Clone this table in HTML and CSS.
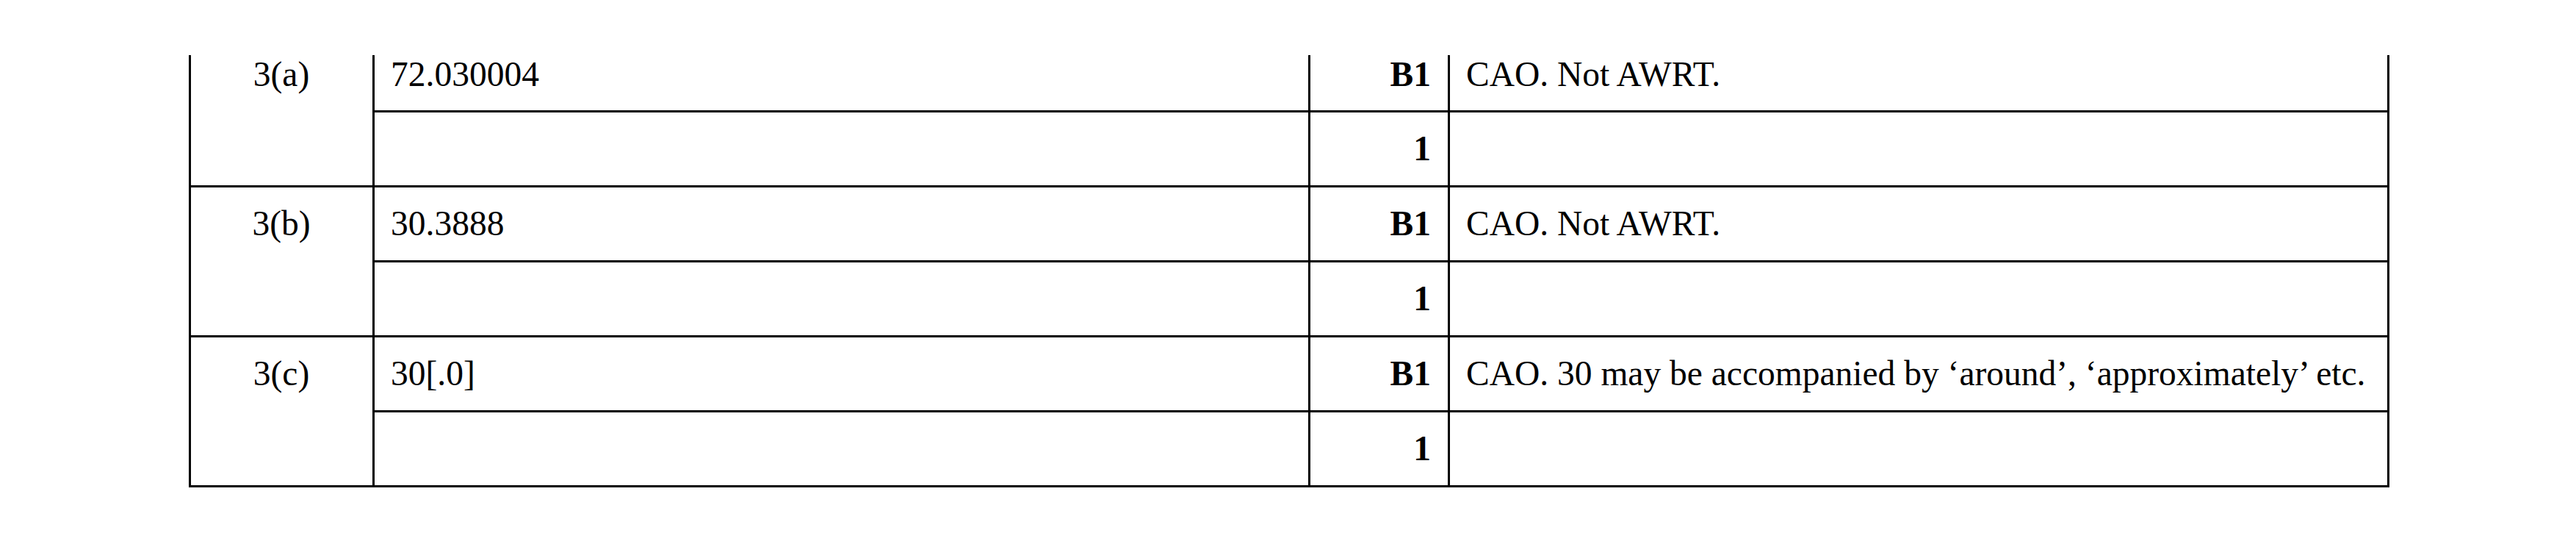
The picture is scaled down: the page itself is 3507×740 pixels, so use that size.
FILE: index.html
```html
<!DOCTYPE html>
<html lang="en">
<head>
<meta charset="utf-8">
<title>Mark scheme</title>
<link rel="stylesheet" href="styles.css">
</head>
<body>
<div class="page">
  <table class="scheme">
    <colgroup>
      <col class="c-part">
      <col class="c-ans">
      <col class="c-mark">
      <col class="c-note">
    </colgroup>
    <tbody>
      <tr class="first">
        <td class="part" rowspan="2">3(a)</td>
        <td class="ans">72.030004</td>
        <td class="mark">B1</td>
        <td class="note">CAO. Not AWRT.</td>
      </tr>
      <tr>
        <td class="ans"></td>
        <td class="mark">1</td>
        <td class="note"></td>
      </tr>
      <tr>
        <td class="part" rowspan="2">3(b)</td>
        <td class="ans">30.3888</td>
        <td class="mark">B1</td>
        <td class="note">CAO. Not AWRT.</td>
      </tr>
      <tr>
        <td class="ans"></td>
        <td class="mark">1</td>
        <td class="note"></td>
      </tr>
      <tr>
        <td class="part" rowspan="2">3(c)</td>
        <td class="ans">30[.0]</td>
        <td class="mark">B1</td>
        <td class="note">CAO. 30 may be accompanied by ‘around’, ‘approximately’ etc.</td>
      </tr>
      <tr>
        <td class="ans"></td>
        <td class="mark">1</td>
        <td class="note"></td>
      </tr>
    </tbody>
  </table>
</div>
</body>
</html>
```
FILE: styles.css
```css
html, body {
  margin: 0;
  padding: 0;
  background: #ffffff;
}

.page {
  padding: 75px 0 0 257px;
  height: 665px;
  box-sizing: border-box;
  overflow: hidden;
}

.scheme {
  border-collapse: collapse;
  table-layout: fixed;
  width: 2996px;
  font-family: "Liberation Serif", "Times New Roman", serif;
  font-size: 47.5px;
  line-height: 52px;
  color: #000000;
}

.c-part { width: 250px; }
.c-ans { width: 1274px; }
.c-mark { width: 190px; }
.c-note { width: 1279px; }

.scheme td {
  border: 3px solid #000000;
  padding: 23px 23px 24px 22px;
  vertical-align: top;
  white-space: nowrap;
  height: 52px;
}

.scheme tr.first td {
  border-top: none;
  padding-top: 0;
  padding-bottom: 23px;
}

.part {
  text-align: center;
}

.ans {
  text-align: left;
}

.mark {
  text-align: right;
  font-weight: bold;
}

.note {
  text-align: left;
  padding-left: 23px;
}
```
